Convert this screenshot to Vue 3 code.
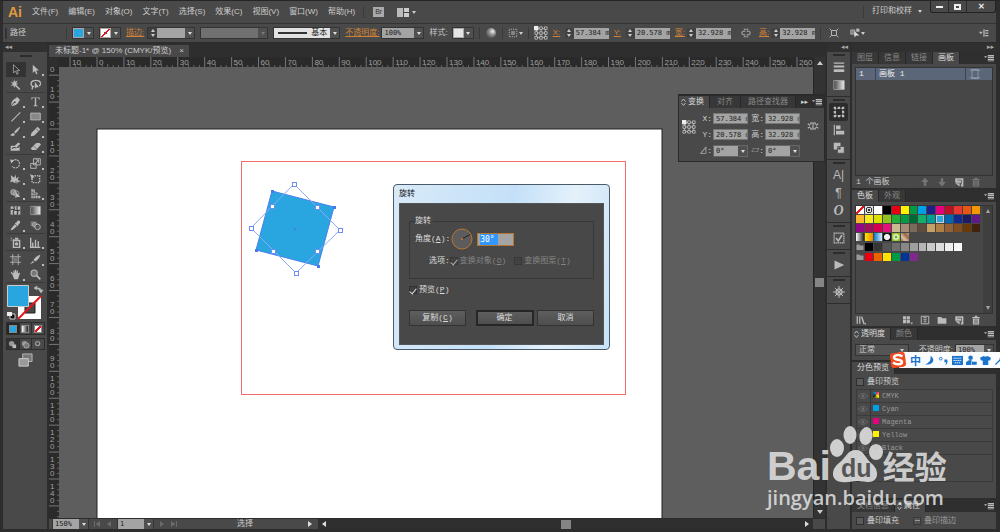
<script setup>
const menus = ['文件(F)', '编辑(E)', '对象(O)', '文字(T)', '选择(S)', '效果(C)', '视图(V)', '窗口(W)', '帮助(H)']

const icons = {
  select: '<path d="M5 1v12l3-3 2 5 2-1-2-4.500h4z" fill="#333" stroke="#bbb"/>',
  direct: '<path d="M4 1v12l3-3 2 5 2-1-2-4.500h4z"/>',
  wand: '<path d="M6 0l1 4 4-2-2 4 3 1-3 1.500 6 6-1.500 1.500-6-6L6 13 5 9l-4 1 3-3-3-3 4 1z"/>',
  lasso: '<path d="M6 11C2 11 1 8 2 5c2-4 11-4 13 0 1 2 0 4-2 5" fill="none" stroke="#bbb" stroke-width="2"/><path d="M4 10l-1 5" stroke="#bbb" stroke-width="2"/><path d="M7 4v10l2-2 4 0z"/>',
  pen: '<path d="M10 1l5 5-2 1c0 4-5 7-11 8l4-5-1-1-4 5C2 8 5 4 9 3z"/><circle cx="7" cy="9" r="1.300" fill="#444"/>',
  type: '<path d="M2 2h12v3h-1l-1-2H9v10l2 1v1H5v-1l2-1V3H4L3 5H2z"/>',
  line: '<path d="M2 15L15 2" stroke="#bbb" stroke-width="1.500"/>',
  rect: '<path d="M1 3h14v10H1z" fill="#888" stroke="#ccc"/>',
  brush: '<path d="M15 1c-3 1-7 5-9 8l2 2c3-3 6-7 7-10zM5 10c-2 0-2 2-5 3 3 2 7 2 7-1z"/>',
  pencil: '<path d="M11 1l4 4-9 9-5 1 1-5z"/><path d="M9 4l3 3" stroke="#444"/>',
  blob: '<path d="M1 7h6l5-5 3 2-6 6h3l2-2v6H1z"/><path d="M3 11c2-2 4-2 6-1" stroke="#444" stroke-width="1.500" fill="none"/>',
  eraser: '<path d="M9 3h5l2 2-7 8H3l-2-2z"/><path d="M5 7l5 5" stroke="#555"/>',
  rotate: '<path d="M3 5a6 6 0 1 1 0 7" fill="none" stroke="#bbb" stroke-width="1.600" stroke-dasharray="3 1"/><path d="M0 2l6 1-4 5z"/>',
  scale: '<path d="M5 1h10v9H5zM1 8h8v7H1z" fill="none" stroke="#bbb" stroke-width="1.300"/><path d="M7 8l4-5h-3V2h5v5h-1V4L8 9z"/>',
  warp: '<path d="M1 3l5 4 2-5 1 6 4-3-2 5 5 2-5 1-3-1-2 3-2-3-4 1 2-4z"/><path d="M1 13c4-4 6 3 11 1" fill="none" stroke="#bbb"/>',
  free: '<path d="M3 4h11v10H3z" fill="none" stroke="#bbb" stroke-width="2" stroke-dasharray="2 1.600"/><path d="M0 1l7 5-3 1-1 4z"/>',
  shape: '<circle cx="5" cy="6" r="4" fill="#888" stroke="#bbb"/><circle cx="9" cy="8" r="4" fill="none" stroke="#bbb"/><path d="M8 5v10l2-2h5z"/>',
  perspective: '<path d="M2 1l5 1v13H2zM8 6l3 1v8H8zM12 10l3 2v3h-3z"/><path d="M2 6l13 5M2 11h13M4.500 1v14" stroke="#555"/>',
  mesh: '<path d="M1 2h14v12H1z"/><path d="M1 7c4-4 7 5 14 0M5 2c5 4-4 7 1 12M11 2c-4 4 4 7-1 12" stroke="#333" stroke-width="1.500" fill="none"/>',
  gradient: '<defs><linearGradient id="tg"><stop stop-color="#444"/><stop offset="1" stop-color="#eee"/></linearGradient></defs><path d="M1 2h14v12H1z" fill="url(#tg)" stroke="#aaa"/>',
  dropper: '<path d="M11 1c3-1 5 2 3 4l-2 2 0 1-1 1-4-4 1-1h1zM7 6l3 3-6 5-3 1 1-3z"/>',
  blend: '<path d="M1 2h7v7H1z" fill="#777"/><circle cx="7" cy="7" r="3.500" fill="#888" stroke="#bbb"/><circle cx="11" cy="10" r="4" fill="#555" stroke="#bbb" stroke-width="1.300"/>',
  spray: '<path d="M5 5h9v10H5z" fill="none" stroke="#bbb" stroke-width="2"/><circle cx="9.500" cy="10" r="2.500"/><path d="M7 1h5v3H7zM1 1h2v1H1zM4 3h2v1H4zM1 4h2v1H1z"/>',
  graph: '<path d="M1 1v14h14M4 8v6M8 4v10M12 6v8" fill="none" stroke="#bbb" stroke-width="2"/>',
  artboard: '<path d="M4 0v16M12 0v16M0 4h16M0 12h16" stroke="#bbb" stroke-width="1.200"/><path d="M5 5h6v6H5z" fill="#777"/>',
  slice: '<path d="M15 1c-4 1-8 4-10 8l3 2c4-3 6-6 7-10zM4 10l-4 5 6-3z"/>',
  hand: '<path d="M4 9L1 5l1-1 3 3V2h1.500v4L7.500 1H9v5l1-4h1.500v5l2-2 1 1-3 9H6z"/>',
  zoom: '<circle cx="6" cy="6" r="4.500" fill="#777" stroke="#bbb" stroke-width="1.500"/><path d="M9 9l6 6" stroke="#bbb" stroke-width="2.500"/>',
  strokes: '<path d="M1 2h14v1.500H1zM1 6h14v2.500H1zM1 11h14v3.500H1z"/>',
  transform: '<path d="M3 3h10v10H3z" fill="none" stroke="#bbb" stroke-width="1.200" stroke-dasharray="1.500 1"/><path d="M1 1h3v3H1zM6.500 1h3v3h-3zM12 1h3v3h-3zM1 6.500h3v3H1zM12 6.500h3v3h-3zM1 12h3v3H1zM6.500 12h3v3h-3zM12 12h3v3h-3z"/>',
  align: '<path d="M1 1h1.500v14H1zM4 2h6v5H4zM4 9h11v5H4z"/>',
  pathfinder: '<path d="M1 1h9v9H1z"/><path d="M6 6h9v9H6z" stroke="#484848"/><path d="M7 7h3v3H7z" fill="#444"/>',
  check: '<path d="M1.500 1.500h13v13h-13z" fill="none" stroke="#bbb" stroke-width="1.500" stroke-dasharray="2 .7"/><path d="M4 8l3 4 5-8" fill="none" stroke="#bbb" stroke-width="2"/>',
  play: '<path d="M2 2l13 6-13 6z"/>',
  wheel: '<circle cx="8" cy="8" r="4" fill="none" stroke="#bbb" stroke-width="1.500"/><path d="M8 0v16M0 8h16M2.500 2.500l11 11M13.500 2.500l-11 11" stroke="#bbb" stroke-width="1.300"/>',
  link: '<path d="M5 6V4h6v2M5 10v2h6v-2M8 5v6M1 5l3 2M1 11l3-2M15 5l-3 2M15 11l-3-2" fill="none" stroke="#bbb" stroke-width="1.400"/>',
  chain: '<path d="M7 5H3C1 5 1 11 3 11h4M9 5h4c2 0 2 6 0 6H9M5 1l1 2M11 1l-1 2M5 15l1-2M11 15l-1-2M8 1v2M8 15v-2" fill="none" stroke="#bbb" stroke-width="1.500"/>',
  isolate: '<path d="M4 4h8v8H4zM1 1l3 3M15 1l-3 3M1 15l3-3M15 15l-3-3" fill="none" stroke="#bbb" stroke-width="1.500"/>',
  similar: '<path d="M1 3h7v7H1z" fill="#888" stroke="#bbb"/><path d="M10 1h5v5h-5z" fill="#bbb"/><path d="M7 5v10l3-3h5z" fill="#ddd"/>',
  dotted: '<path d="M2 2h12v12H2z" fill="none" stroke="#bbb" stroke-width="1.500" stroke-dasharray="1.500 1.500"/><path d="M5 5h6v6H5z" fill="#888"/>',
  anchors: '<g fill="none" stroke="#bbb"><path d="M3 3h10v10H3zM8 3v10M3 8h10"/><g fill="#484848"><path d="M6.500 1h3v3h-3zM12 1h3v3h-3zM1 6.500h3v3H1zM6.500 6.500h3v3h-3zM12 6.500h3v3h-3zM1 12h3v3H1zM6.500 12h3v3h-3zM12 12h3v3h-3z"/></g></g><path d="M0 0h5v5H0z" fill="#eee"/>',
  up: '<path d="M8 1l6 7h-4v6H6V8H2z"/>',
  down: '<path d="M8 15l6-7h-4V2H6v6H2z"/>',
  page: '<path d="M2 2h13v13h-4V9H2zM2 10h7v5z"/><path d="M5 5h7M12 5v7" stroke="#484848"/>',
  trash: '<path d="M2 3h12v2H2zM6 1h4v2H6zM3 6h10v9H3z"/><path d="M6 7v7M8 7v7M10 7v7" stroke="#555"/>',
  library: '<path d="M1 2h2v12H1zM5 2h2v12H5zM8 3l2-1 4 12-2 1zM14 13h2v2h-2z"/>',
  kinds: '<path d="M0 2h5v5H0zM6 2h5v5H6zM0 8h5v5H0zM6 8h5v5H6zM12 12h4l-2 3z"/>',
  options: '<path d="M2 2h12v12H2z" fill="none" stroke="#bbb" stroke-width="1.500"/><path d="M5 4h6M5 7h6M5 10h6M8 3v10" stroke="#bbb"/>',
  folder: '<path d="M1 3h6l1 2h7v9H1z"/>',
  board: '<path d="M4 2h8v12H4zM1 3h14M1 13h14" fill="none" stroke="#9aa5b5"/>',
  panelmenu: '<path d="M0 5h5L2.500 8zM6 3h10v2H6zM6 6h10v2H6zM6 9h10v2H6zM6 12h10v1H6z"/>',
  controlmenu: '<path d="M0 6h6L3 10zM7 2h2v12H7zM10 3h5v2h-5zM10 7h5v2h-5zM10 11h5v2h-5z"/>',
  updown: '<path d="M4 7l4-5 4 5M4 10l4 5 4-5" fill="none" stroke="#bbb" stroke-width="2"/>',
  first: '<path d="M2 2h2v12H2zM14 2v12L5 8z"/>',
  prev: '<path d="M12 2v12L4 8z"/>',
  next: '<path d="M4 2v12l8-6z"/>',
  last: '<path d="M12 2h2v12h-2zM2 2v12l9-6z"/>',
  eye: '<path d="M1 8c3-5 11-5 14 0-3 5-11 5-14 0z" fill="none" stroke="#6b6b6b" stroke-width="1.500"/><circle cx="8" cy="8" r="2.500" fill="#6b6b6b"/>',
  screens: '<path d="M5 1h10v8H5z" fill="#777" stroke="#bbb"/><path d="M1 6h10v8H1z" fill="#999" stroke="#ccc"/>',
}

const toolGroups = [
  ['select', 'direct', 'wand', 'lasso'],
  ['pen', 'type', 'line', 'rect', 'brush', 'pencil', 'blob', 'eraser'],
  ['rotate', 'scale', 'warp', 'free', 'shape', 'perspective'],
  ['mesh', 'gradient', 'dropper', 'blend'],
  ['spray', 'graph'],
  ['artboard', 'slice', 'hand', 'zoom'],
]
const plainTools = ['select', 'wand', 'lasso', 'mesh', 'gradient', 'blend', 'artboard', 'zoom', 'free', 'blob']

const geometry = [
  { label: 'X', value: '57.384 mm' },
  { label: 'Y', value: '20.578 mm' },
  { label: '宽', value: '32.928 mm' },
  { label: '高', value: '32.928 mm' },
]

const dockGroups = [
  ['strokes', 'gradient'],
  ['transform', 'align', 'pathfinder'],
  ['A|', '¶', 'O'],
  ['check'],
  ['play'],
  ['wheel'],
]

const step = 700 / 26
const across = Array.from({ length: 28 }, (_, i) => ({ x: 38 + (i - 1) * step, text: Math.abs(i - 1) * 10 }))
const downward = Array.from({ length: 17 }, (_, i) => {
  const y = 62 + (i - 2) * step
  const chars = String(Math.abs(i - 2) * 10).split('').reverse()
  return { y, chars: chars.map((c, k) => ({ c, y: y - 3 - k * 7 })).filter((d) => d.y > 4) }
})

const swatches = [
  'none', 'register', '#fff', '#000', '#e60012', '#fff100', '#009944', '#00a0e9', '#1d2088', '#e4007f', '#c30d23', '#e8382f', '#ea5514', '#f39800',
  '#f8b62d', '#f5ea1c', '#dbe000', '#8fc31f', '#22ac38', '#059b41', '#006934', '#13ae67', '#009e96', '#2ea7e0', '#0068b7', '#142a8a', '#1b1c61', '#601986',
  '#920783', '#a40b5d', '#d7004f', '#e4117a', '#cab890', '#a68b75', '#7a6a56', '#604c3f', '#c9a063', '#ae8045', '#956134', '#7f4f21', '#6a3906', '#40220f',
  'linear-gradient(90deg,#fff,#222)', 'linear-gradient(90deg,#ffe400,#f08300)', 'linear-gradient(90deg,#0a78c8,#d8ecfa)',
  'radial-gradient(#eee 50%,#111 55%)', 'radial-gradient(#6ab82a 25%,#fff 30%,#8fc31f 70%)', 'linear-gradient(45deg,#a07050,#dcc0a0,#96684a,#c8a080)',
]
const grays = ['#000', '#363636', '#555', '#6e6e6e', '#888', '#9f9f9f', '#b5b5b5', '#c9c9c9', '#dcdcdc', '#efefef', '#f8f8f8']
const brights = ['#e60012', '#eb6100', '#ffe100', '#009944', '#003596', '#7d2a8c']

const plates = [
  { name: 'CMYK', color: 'conic-gradient(#e4007f,#fff100,#222,#00a0e9)' },
  { name: 'Cyan', color: '#00a0e9' },
  { name: 'Magenta', color: '#e4007f' },
  { name: 'Yellow', color: '#fff100' },
  { name: 'Black', color: '#1a1a1a' },
]

const square = [[213, 124], [275, 140], [259, 199], [197, 183]]
const handles = [[235, 117], [281, 163], [237, 206], [192, 161], [213, 139], [258, 140], [258, 184], [214, 184]]
</script>

<template>
  <div class="app">
    <header class="menubar">
      <span class="logo">Ai</span>
      <nav class="menus">
        <button v-for="m in menus" :key="m">{{ m }}</button>
      </nav>
      <i class="sep"></i>
      <button class="bridge" aria-label="Bridge">Br</button>
      <button class="arrange" aria-label="排列文档"><b></b><b></b><i class="tri"></i></button>
      <span class="grow"></span>
      <i class="sep"></i>
      <button class="workspace">打印和校样<i class="tri small"></i></button>
      <div class="window-buttons">
        <button aria-label="最小化"><i class="min"></i></button>
        <button aria-label="还原"><i class="max"></i></button>
        <button aria-label="关闭">✕</button>
      </div>
    </header>

    <section class="control">
      <i class="handle"></i>
      <span class="kind">路径</span>
      <i class="sep"></i>
      <div class="combo"><button class="chip blue" aria-label="填色"></button><button class="caret" aria-label="填色选项"></button></div>
      <div class="combo"><button class="chip none" aria-label="描边颜色"></button><button class="caret" aria-label="描边选项"></button></div>
      <label class="hot" for="weight">描边:</label>
      <div class="combo">
        <span class="spin"><button aria-label="增加"></button><button aria-label="减少"></button></span>
        <input id="weight" class="w28"><button class="caret" aria-label="粗细"></button>
      </div>
      <div class="combo"><select class="profile" aria-label="变量宽度" disabled></select><button class="caret faint" aria-label="宽度配置" disabled></button></div>
      <div class="combo">
        <button class="brushdef"><i></i>基本</button><button class="caret" aria-label="画笔"></button>
      </div>
      <label class="hot" for="alpha">不透明度:</label>
      <div class="combo tight"><input id="alpha" class="w32" value="100%"><button class="caret" aria-label="不透明度选项"></button></div>
      <span>样式:</span>
      <div class="combo tight"><button class="chip white" aria-label="图形样式"></button><button class="caret" aria-label="样式选项"></button></div>
      <i class="sep"></i>
      <button class="ball" aria-label="重新着色图稿"></button>
      <i class="sep"></i>
      <button class="tool-menu" aria-label="对齐"><svg class="i10" viewBox="0 0 16 16" v-html="icons.dotted"></svg><i class="tri"></i></button>
      <i class="sep"></i>
      <svg class="i14" viewBox="0 0 16 16" v-html="icons.anchors"></svg>
      <template v-for="(g, i) in geometry" :key="g.label">
        <svg v-if="i === 3" class="i10 chain" viewBox="0 0 16 16" v-html="icons.chain"></svg>
        <div class="geo">
          <label class="hot" :for="'c' + i">{{ g.label }}:</label>
          <span class="spin"><button aria-label="增加"></button><button aria-label="减少"></button></span>
          <input :id="'c' + i" class="w35" :value="g.value">
        </div>
      </template>
      <i class="sep"></i>
      <svg class="i10 isolate" viewBox="0 0 16 16" v-html="icons.isolate"></svg>
      <button class="tool-menu" aria-label="选择类似的对象"><svg class="i10" viewBox="0 0 16 16" v-html="icons.similar"></svg><i class="tri"></i></button>
      <span class="grow"></span>
      <button class="bar-menu" aria-label="控制面板菜单"><svg class="i10" viewBox="0 0 16 16" v-html="icons.controlmenu"></svg></button>
    </section>

    <main class="body">
      <aside class="tools">
        <div class="strip">◂◂</div>
        <div class="tool-body">
          <i class="grip"></i>
          <div v-for="(g, i) in toolGroups" :key="i" class="tool-group">
            <button v-for="t in g" :key="t" :class="{ on: t === 'select', more: !plainTools.includes(t) }" :aria-label="t">
              <svg viewBox="0 0 16 16" v-html="icons[t]"></svg>
            </button>
          </div>
          <svg class="fillstroke" viewBox="0 0 40 36">
            <path d="M12 12h23v23H12z" fill="#fff" />
            <path d="M19 19h10v10H19z" fill="#484848" stroke="#222" />
            <path d="M12 35l23-23" stroke="#e8141c" stroke-width="2" />
            <path d="M1.500 1.500h21v21h-21z" fill="#29a5df" stroke="#ccc" />
            <path d="M30 4h3q2 0 2 3M28 4l3-2v4zM33 6h4l-2 3z" fill="#bbb" stroke="#bbb" stroke-width=".6" />
            <path d="M4 30h5v5H4z" fill="#111" stroke="#ccc" /><path d="M1 28h5v4H1z" fill="#eee" />
          </svg>
          <div class="triple modes">
            <button aria-label="颜色"><i class="m-color"></i></button>
            <button aria-label="渐变"><i class="m-grad"></i></button>
            <button aria-label="无"><i class="m-none"></i></button>
          </div>
          <div class="triple draws">
            <button v-for="n in 3" :key="n" :aria-label="'绘图模式 ' + n">
              <svg viewBox="0 0 12 10"><circle cx="5" cy="4" r="3" fill="#999" /><circle v-if="n === 3" cx="5" cy="4" r="1.500" fill="#444" /><path v-else-if="n === 1" d="M6 5h4v4H6z" fill="#bbb" /><circle v-else cx="7" cy="6" r="3" fill="#777" stroke="#aaa" /></svg>
            </button>
          </div>
          <button class="screen" aria-label="更改屏幕模式"><svg viewBox="0 0 16 16" v-html="icons.screens"></svg></button>
        </div>
      </aside>

      <section class="document">
        <div class="doc-tabs"><button>未标题-1* @ 150% (CMYK/预览)<span>×</span></button></div>
        <div class="work">
          <div class="sheet">
            <svg class="hruler">
              <g v-for="t in across" :key="t.x">
                <path :d="`M${t.x} 0v10`" stroke="#777" />
                <path v-for="n in 4" :key="n" :d="`M${t.x + n * 5.38} ${n === 2 ? 7 : 8}v3`" stroke="#666" />
                <text :x="t.x + 2" y="8">{{ t.text }}</text>
              </g>
            </svg>
            <div class="middle">
              <svg class="vruler">
                <g v-for="t in downward" :key="t.y">
                  <path :d="`M0 ${t.y}h10`" stroke="#777" />
                  <path v-for="n in 4" :key="n" :d="`M8 ${t.y + n * 5.38}h3`" stroke="#666" />
                  <text v-for="d in t.chars" :key="d.y" x="1" :y="d.y">{{ d.c }}</text>
                </g>
              </svg>
              <svg class="canvas">
                <rect x="38" y="62" width="565" height="100%" fill="#fff" stroke="#222" />
                <rect x="182.500" y="94.500" width="384" height="233" fill="none" stroke="#f26d6d" />
                <polygon :points="square.join(' ')" fill="#29a5e0" stroke="#4a80f0" />
                <polygon :points="handles.slice(0, 4).join(' ')" fill="none" stroke="#8fa8f4" />
                <rect v-for="p in square" :key="p.join()" :x="p[0] - 1" :y="p[1] - 1" width="3" height="3" fill="#4a78f0" />
                <rect v-for="p in handles" :key="p.join()" :x="p[0] - 1.500" :y="p[1] - 1.500" width="4" height="4" fill="#fff" stroke="#6b8df5" />
                <rect x="235" y="161" width="2" height="2" fill="#4a78f0" />
              </svg>
            </div>
          </div>
          <div class="vscroll"><i class="arrow-up"></i><i class="thumb"></i><i class="arrow-down"></i></div>
        </div>
        <footer class="status">
          <div class="combo"><input class="w26" value="150%" aria-label="缩放"><button class="caret" aria-label="缩放级别"></button></div>
          <button aria-label="首项"><svg class="i8" viewBox="0 0 16 16" v-html="icons.first"></svg></button>
          <button aria-label="上一项"><svg class="i8" viewBox="0 0 16 16" v-html="icons.prev"></svg></button>
          <div class="combo"><input class="w26" value="1" aria-label="画板"><button class="caret" aria-label="画板列表"></button></div>
          <button aria-label="下一项"><svg class="i8" viewBox="0 0 16 16" v-html="icons.next"></svg></button>
          <button aria-label="末项"><svg class="i8" viewBox="0 0 16 16" v-html="icons.last"></svg></button>
          <span class="mode">选择</span>
          <button class="lit" aria-label="状态菜单"><svg class="i8" viewBox="0 0 16 16" v-html="icons.next"></svg></button>
          <div class="hscroll"><svg class="i8" viewBox="0 0 16 16" v-html="icons.prev"></svg><i class="thumb"></i><svg class="i8" viewBox="0 0 16 16" v-html="icons.next"></svg></div>
          <i class="corner"></i>
        </footer>
      </section>

      <aside class="dock">
        <div class="strip">◂◂</div>
        <div v-for="(g, i) in dockGroups" :key="i" class="dock-group">
          <i class="grip"></i>
          <button v-for="t in g" :key="t" :class="{ on: t === 'transform' }" :aria-label="t">
            <svg v-if="icons[t]" viewBox="0 0 16 16" v-html="icons[t]"></svg>
            <span v-else :class="{ slant: t === 'O' }">{{ t }}</span>
          </button>
        </div>
        <div class="dock-rest"></div>
      </aside>

      <aside class="panels">
        <div class="strip">▸▸</div>
        <section class="panel">
          <div class="tabs"><button>图层</button><button>信息</button><button>链接</button><button class="on">画板</button><svg class="i10" viewBox="0 0 16 16" v-html="icons.panelmenu"></svg></div>
          <div class="list boards">
            <div class="board"><span>1</span><span>画板 1</span><svg class="i12" viewBox="0 0 16 16" v-html="icons.board"></svg></div>
          </div>
          <div class="foot"><span>1 个画板</span>
            <div class="foot-icons"><svg v-for="n in ['up', 'down', 'page', 'trash']" :key="n" :class="{ dim: n !== 'page' }" viewBox="0 0 16 16" v-html="icons[n]"></svg></div>
          </div>
        </section>

        <section class="panel">
          <div class="tabs"><button class="on">色板</button><button>外观</button><svg class="i10" viewBox="0 0 16 16" v-html="icons.panelmenu"></svg></div>
          <div class="list colors">
            <div class="color-area">
              <div class="grid">
                <template v-for="c in swatches" :key="c">
                  <i v-if="c === 'none'" class="s-none"></i>
                  <i v-else-if="c === 'register'" class="s-reg"></i>
                  <i v-else :class="{ picked: c === '#2ea7e0' }" :style="{ background: c }"></i>
                </template>
              </div>
              <div class="grid"><svg viewBox="0 0 16 16" v-html="icons.folder"></svg><i v-for="c in grays" :key="c" :style="{ background: c }"></i></div>
              <div class="grid"><svg viewBox="0 0 16 16" v-html="icons.folder"></svg><i v-for="c in brights" :key="c" :style="{ background: c }"></i></div>
            </div>
            <div class="mini-scroll"><i class="arrow-up"></i><i class="arrow-down"></i></div>
          </div>
          <div class="foot">
            <svg class="i10" viewBox="0 0 16 16" v-html="icons.library"></svg>
            <div class="foot-icons"><svg v-for="n in ['kinds', 'options', 'folder', 'page', 'trash']" :key="n" viewBox="0 0 16 16" v-html="icons[n]"></svg></div>
          </div>
        </section>

        <section class="panel">
          <div class="tabs"><button class="on"><svg class="updown" viewBox="3 0 10 16" v-html="icons.updown"></svg>透明度</button><button>颜色</button><svg class="i10" viewBox="0 0 16 16" v-html="icons.panelmenu"></svg></div>
          <div class="opacity">
            <div class="select-wrap"><select aria-label="混合模式"><option>正常</option></select><i class="tri"></i></div>
            <label for="op">不透明度:</label>
            <div class="combo"><input id="op" class="w28" value="100%"><button class="caret" aria-label="数值"></button></div>
          </div>
        </section>

        <section class="panel">
          <div class="tabs"><button class="on">分色预览</button></div>
          <label class="tick"><input type="checkbox">叠印预览</label>
          <table class="plates">
            <tbody>
              <tr v-for="p in plates" :key="p.name">
                <td class="eye"><svg class="i10" viewBox="0 0 16 16" v-html="icons.eye"></svg></td>
                <td><i :style="{ background: p.color }"></i>{{ p.name }}</td>
              </tr>
              <tr class="rest"><td></td><td></td></tr>
            </tbody>
          </table>
        </section>

        <section class="panel last">
          <div class="tabs"><button>文档信息</button><button class="on"><svg class="updown" viewBox="3 0 10 16" v-html="icons.updown"></svg>属性</button><svg class="i10" viewBox="0 0 16 16" v-html="icons.panelmenu"></svg></div>
          <div class="attrs">
            <label class="tick"><input type="checkbox">叠印填充</label>
            <label class="tick off"><input type="checkbox" disabled>叠印描边</label>
          </div>
        </section>
      </aside>
    </main>

    <section class="float">
      <div class="tabs"><button class="on"><svg class="updown" viewBox="3 0 10 16" v-html="icons.updown"></svg>变换</button><button>对齐</button><button>路径查找器</button><span class="more-tabs">▸▸</span><svg class="i10" viewBox="0 0 16 16" v-html="icons.panelmenu"></svg></div>
      <div class="float-body">
        <svg class="i14" viewBox="0 0 16 16" v-html="icons.anchors"></svg>
        <div class="float-grid">
          <template v-for="i in [0, 2, 1, 3]" :key="i">
            <label :for="'f' + i">{{ geometry[i].label }}:</label>
            <input :id="'f' + i" :value="geometry[i].value">
          </template>
          <label for="rot">⊿:</label><div class="combo"><input id="rot" value="0°"><button class="caret" aria-label="旋转"></button></div>
          <label for="shear">▱:</label><div class="combo"><input id="shear" value="0°"><button class="caret" aria-label="倾斜"></button></div>
        </div>
        <svg class="i12" viewBox="0 0 16 16" v-html="icons.link"></svg>
      </div>
    </section>

    <form class="dialog" @submit.prevent>
      <h1>旋转</h1>
      <div class="dialog-body">
        <fieldset>
          <legend>旋转</legend>
          <div class="angle">
            <label for="angle">角度(<u>A</u>):</label>
            <svg viewBox="0 0 22 22"><circle cx="11" cy="11" r="10" fill="#5c5c5c" stroke="#b87532" /><path d="M11 11l8-4.500" stroke="#222" /><circle cx="11" cy="11" r="1" fill="#d07020" /></svg>
            <input id="angle" value="30°">
          </div>
          <div class="opts">
            <span>选项:</span>
            <label><input type="checkbox" checked disabled>变换对象(<u>O</u>)</label>
            <label><input type="checkbox" disabled>变换图案(<u>T</u>)</label>
          </div>
        </fieldset>
        <label class="preview"><input type="checkbox" checked>预览(<u>P</u>)</label>
        <div class="buttons">
          <button type="button">复制(<u>C</u>)</button>
          <button type="submit" class="ok">确定</button>
          <button type="button">取消</button>
        </div>
      </div>
    </form>

    <div class="watermark">
      <div class="brand">
        <span>Bai</span>
        <svg viewBox="0 0 54 58">
          <g fill="currentColor">
            <ellipse cx="8" cy="22" rx="7" ry="9" /><ellipse cx="21" cy="9" rx="6.500" ry="9" /><ellipse cx="37" cy="10" rx="6.500" ry="9" transform="rotate(10 37 10)" /><ellipse cx="47" cy="26" rx="7" ry="8" />
            <path d="M27 24c8 0 9 8 15 13 8 6 9 18-2 19-6 0-8-1-13-1s-8 2-14 1C1 55 2 43 10 37c7-5 8-13 17-13z" />
          </g>
          <text x="12" y="51">du</text>
        </svg>
        <span class="cn">经验</span>
      </div>
      <div class="url">jingyan.baidu.com</div>
    </div>

    <div class="ime">
      <svg class="sogou" viewBox="0 0 18 18"><rect x="1.500" y="1.500" width="15" height="15" rx="3" fill="#f04a1d" transform="rotate(-8 9 9)" /><path d="M13.500 5.500C10 3 5 4 5 6.500c0 3 8 1.500 8 4.500 0 3-6 3-9 .5" fill="none" stroke="#fff" stroke-width="2.500" /></svg>
      <span>中</span>
      <svg viewBox="0 0 12 12"><path d="M7 1c6 3 3 11-6 9 4-1 7-4 6-9z" /></svg>
      <svg viewBox="0 0 12 12"><circle cx="3" cy="4" r="1.500" fill="none" stroke="#1b74cc" /><path d="M7 5h3c1 3 0 5-2 6l1-3H7z" /></svg>
      <svg viewBox="0 0 12 12"><path d="M0 1h12v10H0z" /><path d="M1.500 3.500h9M1.500 6h9M3 8.500h6" stroke="#fff" stroke-dasharray="1.500 .7" /></svg>
      <svg viewBox="0 0 12 12"><circle cx="5" cy="3" r="2.500" /><path d="M0 8q5-5 8 0v3H0z" /><path d="M6 7h6v4H6z" stroke="#fff" stroke-width=".6" /></svg>
      <svg viewBox="0 0 12 12"><path d="M4 1q2 1.500 4 0l4 2-1 3H9v5H3V6H1L0 3z" /></svg>
      <svg viewBox="0 0 12 12"><path d="M1 10l5-5c0-3 2-4 4-4L8 3l1 1 2-1c0 3-2 4-4 3l-5 5z" /></svg>
    </div>
  </div>
</template>

<style>
body { background: #484848; }
</style>

<style scoped>
.app {
  --ui: "Liberation Sans", "Noto Sans CJK SC", sans-serif;
  --mono: "Liberation Mono", "Noto Sans CJK SC", monospace;
  position: relative;
  display: flex;
  flex-direction: column;
  box-sizing: border-box;
  height: 100vh;
  min-height: 500px;
  overflow: hidden;
  padding: 0 4px 3px 3px;
  border-top: 1px solid #252525;
  background: #2d2d2d;
  color: #ccc;
  font: 8px/10px var(--ui);
}
.app * { box-sizing: border-box; }
svg { display: block; fill: #bbb; flex: none; }
button, input, select { margin: 0; padding: 0; border: 0; border-radius: 0; background: none; color: inherit; font: inherit; }
button { white-space: nowrap; flex: none; }
label, span { white-space: nowrap; }
i { font-style: normal; flex: none; }
input { background: #a4a4a4; color: #222; min-width: 0; font: 7px/10px "DejaVu Sans Mono", monospace; padding-left: 2px; }
.grow { flex: 1; }
.sep { width: 1px; height: 12px; background: #3a3a3a; }
.i8 { width: 8px; height: 8px; }
.i10 { width: 10px; height: 10px; }
.i12 { width: 12px; height: 12px; }
.i14 { width: 14px; height: 14px; }
.tri { display: inline-block; border: solid transparent; border-width: 3px 2px 0; border-top-color: #ccc; }

.menubar { display: flex; align-items: center; height: 22px; flex: none; background: #494949; padding-left: 5px; }
.logo { color: #e09a3c; font: bold 14px/20px var(--ui); width: 24px; }
.menus { display: flex; gap: 10px; margin-right: 8px; }
.bridge { width: 11px; height: 10px; margin-left: 9px; background: #aaa; color: #333; font-size: 7px; line-height: 10px; }
.arrange { display: flex; align-items: center; gap: 1px; margin-left: 13px; }
.arrange b { width: 6px; height: 9px; background: #bbb; }
.arrange b + b { height: 9px; width: 5px; background: linear-gradient(#ccc 4px, #444 4px 5px, #ccc 5px); }
.arrange .tri { margin-left: 2px; }
.workspace { display: flex; align-items: center; gap: 6px; padding: 0 8px; margin-bottom: 2px; }
.window-buttons { display: flex; align-self: flex-start; height: 12px; border: 1px solid #222; border-top: 0; border-radius: 0 0 3px 3px; }
.window-buttons button { width: 18px; border-right: 1px solid #2a2a2a; display: grid; place-items: center; color: #eee; font-weight: bold; }
.window-buttons button:last-child { width: 28px; border: 0; }
.min { width: 7px; height: 2px; background: #eee; }
.max { width: 7px; height: 6px; border: 2px solid #eee; }

.control { display: flex; align-items: center; height: 20px; flex: none; gap: 5px; padding: 0 7px 0 2px; background: #494949; border-top: 1px solid #333; border-bottom: 1px solid #2c2c2c; }
.handle { width: 2px; height: 11px; background: #333; margin-right: -2px; }
.kind { width: 51px; }
.hot { color: #cf8237; text-decoration: underline; margin-right: -2px; }
.combo { display: flex; height: 12px; border: 1px solid #333; }
.combo.tight { margin-left: -1px; }
.combo input { height: 10px; }
.caret { width: 9px; height: 10px; background: #505050; display: grid; place-items: center; }
.caret::after { content: ""; border: solid transparent; border-width: 3px 2px 0; border-top-color: #ddd; }
.caret.faint::after { border-top-color: #777; }
.chip { width: 11px; height: 10px; border: 1px solid #aaa; }
.blue { background: #29a5df; }
.white { background: #e4e4e4; }
.none { background: linear-gradient(135deg, transparent 44%, #e8141c 44% 56%, transparent 56%), radial-gradient(#555 25%, #fff 27%); }
.spin { display: flex; flex-direction: column; width: 9px; height: 10px; background: #414141; }
.spin button { flex: 1; display: grid; place-items: center; }
.spin button::after { content: ""; border: solid transparent; border-width: 0 2px 3px; border-bottom-color: #ccc; }
.spin button + button::after { border-width: 3px 2px 0; border-top-color: #ccc; }
.w26 { width: 26px; }
.w28 { width: 28px; }
.w32 { width: 32px; }
.w35 { width: 35px; height: 11px; }
.profile { appearance: none; width: 57px; height: 10px; background: #707070; opacity: 1; }
.brushdef { display: flex; align-items: center; gap: 4px; width: 56px; background: #e2e2e2; color: #222; padding-left: 4px; }
.brushdef i { width: 29px; height: 2px; background: #333; }
.ball { width: 10px; height: 10px; margin: 0 1px; border-radius: 50%; background: radial-gradient(circle at 65% 35%, #eee, #888 40%, #333); }
.tool-menu { display: flex; align-items: center; gap: 1px; }
.geo { display: flex; align-items: center; gap: 2px; }
.geo .hot { min-width: 10px; margin: 0; }
.geo .spin { margin-right: -2px; }
.chain { margin: 0 3px 0 5px; }
.isolate { margin: 0 6px 0 3px; }

.body { display: flex; flex: 1; min-height: 0; gap: 2px; }
.strip { flex: none; height: 9px; background: #303030; color: #aaa; font: 7px/9px "DejaVu Sans", sans-serif; padding: 0 2px; }
.grip { display: block; width: 12px; height: 2px; background: #2c2c2c; margin: 3px auto 0; }

.tools { width: 44px; display: flex; flex-direction: column; flex: none; }
.tool-body { flex: 1; background: #494949; padding: 0 2px 0 3px; }
.tool-body > .grip { margin-bottom: 5px; }
.tool-group { display: grid; grid-template-columns: 1fr 1fr; grid-auto-rows: 15px; border-bottom: 1px solid #3a3a3a; margin-bottom: 1px; }
.tool-group button { position: relative; display: grid; place-items: center; }
.tool-group svg { width: 11px; height: 11px; }
.tool-group .on { background: #333; }
.more::after { content: ""; position: absolute; right: 1px; bottom: 1px; width: 2px; height: 2px; background: #bbb; }
.fillstroke { width: 40px; height: 36px; }
.triple { display: grid; grid-template-columns: repeat(3, 1fr); gap: 1px; background: #2d2d2d; border: 1px solid #2d2d2d; }
.triple button { display: grid; place-items: center; background: #494949; }
.modes { height: 13px; margin-top: 2px; }
.draws { height: 12px; margin-top: 3px; }
.draws button:first-child { background: #333; }
.draws svg { width: 11px; height: 9px; }
.modes button:first-child { background: #262626; }
.modes i { width: 8px; height: 8px; border: 1px solid #888; }
.m-color { background: #29a5df; }
.m-grad { background: linear-gradient(90deg, #fff, #222); }
.m-none { background: linear-gradient(135deg, #fff 40%, #e8141c 40% 60%, #fff 60%); }
.screen { display: block; margin: 3px auto; }
.screen svg { width: 15px; height: 15px; }

.document { flex: 1; min-width: 0; display: flex; flex-direction: column; background: #2e2e2e; }
.doc-tabs { height: 14px; flex: none; padding-top: 2px; }
.doc-tabs button { height: 12px; padding: 0 5px 0 6px; background: #494949; }
.doc-tabs span { margin-left: 8px; }
.work { flex: 1; display: flex; min-height: 0; }
.sheet { flex: 1; min-width: 0; display: flex; flex-direction: column; }
.hruler { height: 10px; width: calc(100% - 10px); margin-left: 10px; background: #2a2a2a; }
.hruler text, .vruler text { fill: #a0a0a0; font: 8px var(--ui); }
.middle { flex: 1; display: flex; min-height: 0; }
.vruler { width: 10px; height: 100%; background: #2a2a2a; }
.canvas { flex: 1 1 0; min-width: 0; height: 100%; background: #5e5e5e; }
.vscroll { width: 12px; flex: none; display: flex; flex-direction: column; justify-content: space-between; align-items: center; padding: 4px 0; background: #333; border-left: 1px solid #262626; }
.vscroll .thumb { width: 9px; height: 9px; background: #858585; margin-bottom: 11px; }
.arrow-up { border: solid transparent; border-width: 0 3px 4px; border-bottom-color: #ccc; }
.arrow-down { border: solid transparent; border-width: 4px 3px 0; border-top-color: #ccc; }
.status { display: flex; align-items: center; height: 11px; flex: none; background: #494949; padding-left: 3px; gap: 4px; border-top: 1px solid #2c2c2c; }
.status .combo { height: 10px; border-width: 0 1px; }
.status > button svg { fill: #6a6a6a; }
.status > .lit svg { fill: #ddd; }
.mode { width: 132px; padding-right: 6px; text-align: center; }
.mode + button { margin-left: -12px; }
.hscroll { flex: 1; display: flex; justify-content: space-between; align-items: center; height: 10px; padding: 0 2px; background: #2f2f2f; }
.hscroll svg { fill: #ddd; }
.hscroll .thumb { width: 10px; height: 9px; background: #858585; }
.corner { width: 8px; height: 10px; background: #494949; }

.dock { width: 23px; flex: none; display: flex; flex-direction: column; }
.dock .strip, .panels .strip { text-align: right; }
.dock-group { background: #494949; border-bottom: 1px solid #2c2c2c; padding: 0 2px 2px; display: flex; flex-direction: column; }
.dock-group .grip { margin-top: 2px; margin-bottom: 2px; }
.dock-group button { height: 18px; display: grid; place-items: center; border-radius: 2px; font: 12px/16px var(--ui); color: #bbb; }
.dock-group svg { width: 12px; height: 12px; }
.dock-group .on { background: #2c2c2c; }
.slant { font-family: "Liberation Serif", serif; font-style: italic; font-weight: bold; font-size: 14px; }
.dock-rest { flex: 1; background: #494949; }

.panels { width: 144px; flex: none; display: flex; flex-direction: column; }
.panel { background: #494949; border-bottom: 2px solid #2d2d2d; font-family: var(--mono); }
.tabs { display: flex; align-items: center; height: 12px; background: #2f2f2f; font-family: var(--ui); }
.tabs button { display: flex; align-items: center; height: 12px; padding: 0 5px; color: #888; background: #373737; border-right: 1px solid #282828; }
.tabs .on { background: #494949; color: #ddd; }
.tabs > svg { margin: 0 2px 0 auto; }
.tabs .updown { width: 5px; height: 8px; margin: 0 2px 0 -3px; }
.list { margin: 3px 3px 0; height: 109px; border: 1px solid #333; background: #474747; }
.board { display: grid; grid-template-columns: 20px 1fr 26px; align-items: center; height: 12px; background: #5b6678; color: #eee; }
.board span { padding-left: 3px; border-right: 1px solid #3d4552; line-height: 12px; }
.board svg { margin-left: 3px; }
.foot { display: flex; align-items: center; justify-content: space-between; height: 12px; padding: 0 15px 0 4px; }
.foot-icons { display: flex; gap: 7px; }
.foot-icons svg { width: 10px; height: 10px; }
.dim { opacity: .4; }
.colors { display: flex; justify-content: space-between; }
.grid { display: grid; grid-template-columns: repeat(14, 1fr); grid-auto-rows: 8px; gap: 1px; width: 124px; margin-bottom: 2px; }
.grid svg { width: 8px; height: 8px; fill: #999; }
.picked { outline: 1px solid #ccc; outline-offset: -1px; }
.s-none { background: linear-gradient(135deg, #fff 42%, #e8141c 42% 58%, #fff 58%); }
.s-reg { background: radial-gradient(#333 15%, #ddd 18% 38%, #333 42% 54%, #ddd 58%); }
.mini-scroll { width: 9px; background: #3c3c3c; display: flex; flex-direction: column; align-items: center; justify-content: space-between; padding: 3px 0; opacity: .7; }
.mini-scroll i { border-left-width: 2px; border-right-width: 2px; }
.opacity { display: flex; align-items: center; height: 20px; padding: 0 2px 0 3px; gap: 2px; }
.opacity label { margin-left: auto; font-family: var(--ui); }
.select-wrap { display: flex; align-items: center; width: 54px; height: 12px; border: 1px solid #333; background: #555; padding-right: 4px; }
.select-wrap select { appearance: none; flex: 1; min-width: 0; padding-left: 3px; line-height: 10px; }
.tick { display: flex; align-items: center; gap: 3px; height: 15px; padding-left: 4px; }
input[type="checkbox"] { appearance: none; width: 8px; height: 8px; padding: 0; background: #5a5a5a; border: 1px solid #303030; flex: none; display: grid; place-items: center; }
input[type="checkbox"]:checked { background: #404040; }
input[type="checkbox"]:checked::before { content: ""; width: 3px; height: 6px; margin-bottom: 2px; border: solid #ddd; border-width: 0 1px 1px 0; transform: rotate(40deg); }
.plates { width: calc(100% - 7px); margin: 0 3px 16px 4px; border-collapse: collapse; color: #999; font-size: 7px; }
.plates td { height: 13px; padding: 0 2px; border: 1px solid #3b3b3b; line-height: 10px; }
.plates .eye { width: 14px; padding: 0 1px; border-right: 1px solid #333; }
.plates i { display: inline-block; width: 6px; height: 6px; margin-right: 3px; }
.plates .rest td { height: 27px; border-right-color: #3b3b3b; }
.last { flex: 1; border: 0; }
.attrs { display: flex; gap: 10px; padding-top: 1px; }
.off { opacity: .6; }
.off input::before { content: ""; width: 5px; height: 1px; background: #ccc; }

.float { position: absolute; left: 678px; top: 93px; width: 147px; background: #494949; border: 1px solid #2a2a2a; border-top-width: 2px; font-family: var(--mono); }
.float .tabs button:nth-child(n+2) { padding: 0 7px; }
.more-tabs { margin-left: auto; font: 7px/9px "DejaVu Sans", sans-serif; }
.float .tabs > svg { margin-left: 4px; }
.float-body { display: flex; align-items: flex-start; gap: 3px; padding: 5px 3px 4px; }
.float-body > .i14 { margin-top: 7px; }
.float-body > .i12 { margin: 7px 0 0 4px; }
.float-grid { display: grid; grid-template-columns: 13px 35px 15px 35px; gap: 5px 1px; }
.float-grid label { text-align: right; line-height: 11px; }
.float-grid > input { height: 11px; border: 1px solid #777; }
.float-grid input { width: 100%; }
.float-grid .combo { height: 12px; border-color: #666; }

.dialog { position: absolute; left: 393px; top: 183px; width: 217px; padding: 0 5px 4px; border: 1px solid #4b5a68; border-radius: 4px; background: linear-gradient(100deg, #d8eaf8, #c4e0f8 50%, #e4f1fb 75%, #c8e2f6); color: #ddd; font-family: var(--mono); }
.dialog h1 { margin: 0; color: #111; font: 8px/18px var(--ui); }
.dialog-body { background: #484848; border: 1px solid #555; padding: 12px 9px 18px; }
fieldset { margin: 0; padding: 2px 5px 0; border: 1px solid #383838; height: 63px; min-width: 0; }
legend { padding: 0 2px 0 0; line-height: 10px; }
.angle { display: flex; align-items: center; gap: 1px; height: 22px; }
.angle svg { width: 22px; height: 22px; }
.angle input { width: 37px; height: 13px; margin-left: 3px; border: 1px solid #b87532; color: #fff; background: linear-gradient(90deg, #a4a4a4 2px, #3397ff 2px 20px, #a4a4a4 20px); font-size: 8px; }
.opts { display: flex; align-items: center; height: 22px; padding-left: 14px; }
.opts label { display: flex; align-items: center; color: #858585; margin: 0 8px 0 0; }
.dialog input[type="checkbox"] { margin-right: 2px; background: #404040; }
.opts input { opacity: .7; }
.preview { display: flex; align-items: center; margin-top: 6px; height: 10px; }
.buttons { display: grid; grid-template-columns: 57px 58px 57px; justify-content: space-between; margin-top: 15px; }
.buttons button { height: 16px; border: 1px solid #333; background: linear-gradient(#5e5e5e, #4e4e4e); }
.buttons .ok { border: 2px solid #262626; margin-left: 3px; margin-right: -3px; }

.watermark { position: absolute; left: 767px; top: 423px; width: 180px; color: rgba(222, 222, 222, .9); }
.brand { display: flex; align-items: flex-end; height: 60px; font: bold 41px/36px var(--ui); }
.brand svg { width: 54px; height: 58px; margin-left: -2px; fill: currentColor; }
.brand text { font: bold 25px var(--ui); fill: #555; }
.brand .cn { font: bold 32px/38px "Noto Sans CJK SC", sans-serif; }
.url { font: 600 20px/28px "Open Sans", "Noto Sans", sans-serif; }

.ime { position: absolute; left: 889px; right: 0; top: 351px; height: 16px; display: flex; align-items: center; gap: 3px; background: linear-gradient(90deg, transparent 10px, #fafcff 10px); color: #1b74cc; overflow: hidden; }
.ime svg { width: 11px; height: 11px; fill: #1b74cc; }
.ime .sogou { width: 18px; height: 18px; }
.ime span { font: bold 11px/14px "Noto Sans CJK SC", sans-serif; }
</style>
